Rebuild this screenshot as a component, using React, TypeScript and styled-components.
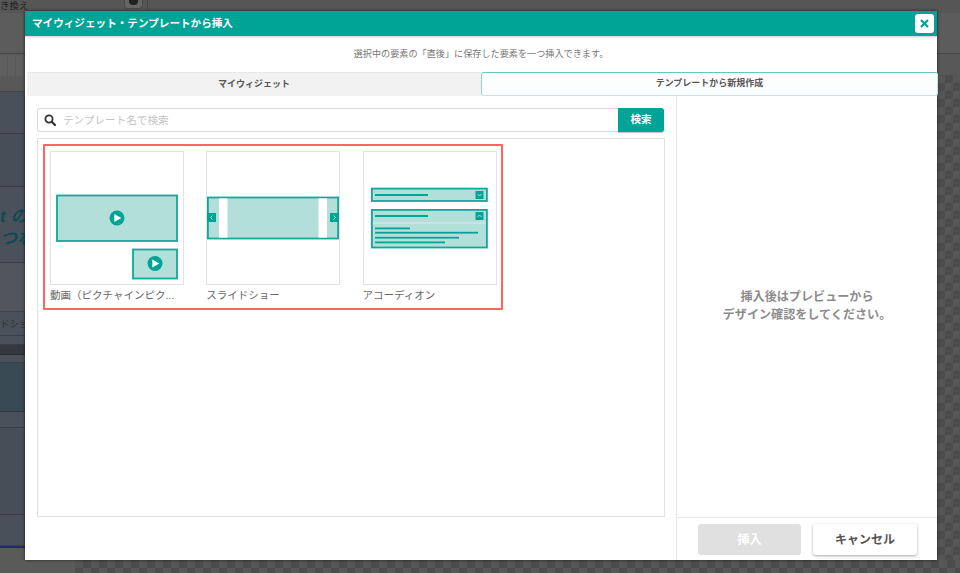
import React from 'react';
import styled, { createGlobalStyle } from 'styled-components';

const TEAL = '#00a496';
const PALE = '#b3dfda';
const EDGE = '#10a899';
const CHECKER = 'conic-gradient(#4c4c4c 25%, transparent 0 50%, #4c4c4c 0 75%, transparent 0)';

const GlobalStyle = createGlobalStyle`
  html, body { margin: 0; padding: 0; height: 100%; overflow: hidden; }
  body { font-family: "Liberation Sans", "Noto Sans CJK JP", sans-serif; }
  * { box-sizing: border-box; }
`;

const Page = styled.div`
  position: relative;
  width: 960px;
  height: 573px;
  background: #5a5a58;
  overflow: hidden;
`;

/* dimmed editor behind the dialog */
const Backdrop = styled.div`
  display: flex;
  flex-direction: column;
  width: 100%;
  height: 100%;
`;

const TopBar = styled.div`
  display: flex;
  align-items: flex-start;
  flex: 0 0 13px;
  background: #565656;
  font-size: 9.5px;
  color: #1e1e1e;
  line-height: 11px;
`;

const TopLabel = styled.span`
  width: 124px;
`;

const TopKnob = styled.span`
  display: flex;
  justify-content: center;
  width: 19px;
  height: 9px;
  background: #666;
  border-radius: 0 0 4px 4px;
  border: 1px solid #4a4a4a;
  border-top: 0;
  margin-right: 4px;

  &::after {
    content: '';
    width: 9px;
    height: 5px;
    background: #222;
    border-radius: 0 0 4px 4px;
  }
`;

const TopDivider = styled.span`
  width: 1px;
  height: 13px;
  background: #4a4a4a;
`;

const BackRow = styled.div<{ $h: number; $bg: string }>`
  flex: 0 0 ${(p) => p.$h}px;
  background: ${(p) => p.$bg};
  border-bottom: 1px solid rgba(0, 0, 0, 0.22);
  overflow: hidden;
  white-space: nowrap;
`;

const BackCells = styled.div`
  display: flex;
  gap: 1px;
  height: 21px;
  margin-top: 1px;
`;

const BackCell = styled.span`
  width: 7px;
  background: #5f5f5f;
`;

const BackHeading = styled.div`
  font-size: 17px;
  line-height: 22px;
  font-weight: 700;
  font-style: italic;
  color: #0d4a52;
`;

const HeadingGap = styled.div`
  height: 19px;
`;

const BackSub = styled.div`
  font-size: 9.5px;
  line-height: 24px;
  color: #2c3138;
`;

const RightChecker = styled.div`
  position: absolute;
  top: 75px;
  right: 0;
  bottom: 0;
  width: 23px;
  background-color: #565656;
  background-image: ${CHECKER};
  background-size: 16px 16px;
`;

const BottomChecker = styled.div`
  position: absolute;
  left: 75px;
  right: 0;
  bottom: 0;
  height: 13px;
  background-color: #565656;
  background-image: ${CHECKER};
  background-size: 16px 16px;
`;

/* dialog */
const Dialog = styled.div`
  position: absolute;
  left: 25px;
  top: 11px;
  width: 912px;
  height: 549px;
  display: flex;
  flex-direction: column;
  background: #fff;
  box-shadow: 0 0 3px rgba(0, 0, 0, 0.65);
`;

const TitleBar = styled.div`
  display: flex;
  align-items: center;
  justify-content: space-between;
  flex: 0 0 25px;
  padding: 0 3px 0 7px;
  background: ${TEAL};
  box-shadow: 0 1px 2px rgba(0, 0, 0, 0.2);
  color: #fff;
  font-size: 10.6px;
  font-weight: 700;
`;

const TitleText = styled.span`
  padding-bottom: 3px;
`;

const CloseButton = styled.button`
  display: flex;
  align-items: center;
  justify-content: center;
  width: 19px;
  height: 19px;
  padding: 0;
  border: 0;
  border-radius: 3px;
  background: #fff;
`;

const Lead = styled.div`
  flex: 0 0 36px;
  display: flex;
  align-items: center;
  justify-content: center;
  font-size: 9.15px;
  color: #777;
  padding-bottom: 3px;
`;

const Tabs = styled.div`
  display: flex;
  flex: 0 0 24px;
  padding-left: 2px;
`;

const Tab = styled.div<{ $active?: boolean }>`
  flex: ${(p) => (p.$active ? '0 0 457px' : '1')};
  display: flex;
  align-items: center;
  justify-content: center;
  padding-bottom: 3px;
  font-size: 9px;
  font-weight: 700;
  color: #555;
  background: #f2f2f2;
  border-top: 1px solid #e8e8e8;
  ${(p) =>
    p.$active &&
    `
    margin-right: -1px;
    background: #fcfdfd;
    border: 1px solid #c2e6e2;
    border-top-color: #6cc6bd;
    border-left-color: #8ed3cc;
    border-radius: 3px;
  `}
`;

const Body = styled.div`
  flex: 1;
  display: flex;
  min-height: 0;
`;

const MainPane = styled.div`
  flex: 0 0 651px;
  display: flex;
  flex-direction: column;
  gap: 6px;
  padding: 12px 12px 43px 12px;
`;

const SearchForm = styled.div`
  display: flex;
  flex: 0 0 24px;
`;

const SearchField = styled.div`
  flex: 1;
  display: flex;
  align-items: center;
  gap: 7px;
  padding: 0 0 0 6px;
  border: 1px solid #d9d9d9;
  border-right: 0;
  border-radius: 3px 0 0 3px;
  font-size: 10.6px;
  color: #c4c4c4;
`;

const Placeholder = styled.span`
  padding-bottom: 2px;
`;

const SearchButton = styled.button`
  flex: 0 0 46px;
  padding: 0 0 3px;
  border: 0;
  border-radius: 0 3px 3px 0;
  background: ${TEAL};
  box-shadow: 0 1px 1px rgba(0, 0, 0, 0.25);
  color: #fff;
  font: 700 10.5px "Liberation Sans", "Noto Sans CJK JP", sans-serif;
`;

const ListBox = styled.div`
  flex: 1;
  margin-right: -1px;
  padding: 5px;
  border: 1px solid #e2e2e2;
`;

const Highlight = styled.div`
  display: inline-flex;
  gap: 22.3px;
  padding: 5px 4px 0 5px;
  height: 166px;
  border: 2px solid #f9675d;
  border-radius: 1px;
`;

const Card = styled.div`
  width: 134px;
  display: flex;
  flex-direction: column;
`;

const Thumb = styled.div`
  width: 134px;
  height: 134px;
  border: 1px solid #e2e2e2;
  background: #fff;
`;

const CardLabel = styled.div`
  margin-top: 3px;
  font-size: 10.5px;
  line-height: 15px;
  color: #666;
  white-space: nowrap;
`;

const SidePane = styled.div`
  flex: 1;
  display: flex;
  flex-direction: column;
  border-left: 1px solid #e6e6e6;
`;

const PreviewNote = styled.div`
  flex: 1;
  display: flex;
  align-items: center;
  justify-content: center;
  text-align: center;
  padding-bottom: 1px;
  font-size: 12.1px;
  line-height: 18px;
  font-weight: 700;
  color: #8c8c8c;
`;

const Footer = styled.div`
  flex: 0 0 43px;
  display: flex;
  justify-content: flex-end;
  gap: 12px;
  padding: 6px 20px 0 0;
  border-top: 1px solid #e6e6e6;
`;

const FooterButton = styled.button<{ $disabled?: boolean }>`
  height: 31px;
  width: ${(p) => (p.$disabled ? '103px' : '104px')};
  padding: 0 0 2px;
  border: 0;
  border-radius: 3px;
  background: ${(p) => (p.$disabled ? '#e0e0e0' : '#fff')};
  color: ${(p) => (p.$disabled ? '#fff' : '#555')};
  box-shadow: ${(p) => (p.$disabled ? 'none' : '0 1px 3px rgba(0,0,0,.35)')};
  font: 700 12px "Liberation Sans", "Noto Sans CJK JP", sans-serif;
`;

const SearchIcon = () => (
  <svg width="12" height="12" viewBox="0 0 12 12" fill="none" stroke="#333" strokeWidth="1.8">
    <circle cx="5" cy="5" r="3.6" />
    <path d="M7.8 7.8 11 11" strokeLinecap="round" strokeWidth="2.2" />
  </svg>
);

const CloseIcon = () => (
  <svg width="9" height="9" viewBox="0 0 9 9" stroke={TEAL} strokeWidth="2.2">
    <path d="M1 1l7 7M8 1l-7 7" />
  </svg>
);

const Play = ({ cx, cy }: { cx: number; cy: number }) => (
  <g>
    <circle cx={cx} cy={cy} r="7.5" fill={TEAL} />
    <path d={`M${cx - 2.7} ${cy - 4}l7 4-7 4z`} fill="#fff" />
  </g>
);

const VideoThumb = () => (
  <svg width="132" height="132" viewBox="0 0 132 132">
    <rect x="6" y="43.5" width="120" height="45.5" fill={PALE} stroke={EDGE} strokeWidth="1.8" />
    <Play cx={66} cy={66} />
    <rect x="82" y="97.5" width="44" height="29" fill={PALE} stroke={EDGE} strokeWidth="1.8" />
    <Play cx={104} cy={111.5} />
  </svg>
);

const SlideThumb = () => (
  <svg width="132" height="132" viewBox="0 0 132 132">
    <rect x="0.9" y="45.5" width="130.2" height="41" fill={PALE} stroke={EDGE} strokeWidth="1.8" />
    <rect x="12" y="46.4" width="8.5" height="39.2" fill="#fff" />
    <rect x="111.5" y="46.4" width="8.5" height="39.2" fill="#fff" />
    <rect x="0" y="61" width="9" height="9" fill={TEAL} />
    <path d="M5.5 63.5 3.5 65.5l2 2" fill="none" stroke={PALE} />
    <rect x="123" y="61" width="9" height="9" fill={TEAL} />
    <path d="M126.5 63.5l2 2-2 2" fill="none" stroke={PALE} />
  </svg>
);

const AccordionThumb = () => (
  <svg width="132" height="132" viewBox="0 0 132 132">
    <rect x="7.9" y="36.6" width="115" height="12.4" fill={PALE} stroke={EDGE} strokeWidth="1.8" />
    <rect x="11" y="42" width="53" height="2" fill={TEAL} />
    <rect x="111.5" y="39" width="8" height="8" fill={TEAL} />
    <path d="M113.5 42l2 2 2-2" fill="none" stroke={PALE} />
    <rect x="7.9" y="57.9" width="115" height="37.6" fill={PALE} stroke={EDGE} strokeWidth="1.8" />
    <rect x="8.8" y="70.5" width="113.2" height="1" fill="#d5ece9" />
    <rect x="11" y="63" width="53" height="2" fill={TEAL} />
    <rect x="111.5" y="60" width="8" height="8" fill={TEAL} />
    <path d="M113.5 65l2-2 2 2" fill="none" stroke={PALE} />
    <rect x="11" y="75.5" width="35" height="1.8" fill={TEAL} />
    <rect x="11" y="79.8" width="103" height="1.8" fill={TEAL} />
    <rect x="11" y="84.8" width="84" height="1.8" fill={TEAL} />
    <rect x="11" y="89.5" width="70" height="1.8" fill={TEAL} />
  </svg>
);

const App = () => (
  <Page>
    <GlobalStyle />
    <Backdrop>
      <TopBar>
        <TopLabel>き換え</TopLabel>
        <TopKnob />
        <TopDivider />
      </TopBar>
      <BackRow $h={41} $bg="#5c5c5c" />
      <BackRow $h={38} $bg="#585858">
        <BackCells>
          <BackCell />
          <BackCell />
          <BackCell />
        </BackCells>
      </BackRow>
      <BackRow $h={42} $bg="#49505a" />
      <BackRow $h={53} $bg="#474e58" />
      <BackRow $h={76} $bg="#4a515b">
        <HeadingGap />
        <BackHeading>t の</BackHeading>
        <BackHeading>つな</BackHeading>
      </BackRow>
      <BackRow $h={49} $bg="#51565e" />
      <BackRow $h={24} $bg="#4a515b">
        <BackSub>ドショ</BackSub>
      </BackRow>
      <BackRow $h={9} $bg="#4a515b" />
      <BackRow $h={10} $bg="#343840" />
      <BackRow $h={8} $bg="#4a515b" />
      <BackRow $h={49} $bg="#3a4a55" />
      <BackRow $h={16} $bg="#4a515b" />
      <BackRow $h={87} $bg="#474e58" />
      <BackRow $h={31} $bg="#49505a" />
      <BackRow $h={2} $bg="#21356d" />
    </Backdrop>
    <RightChecker />
    <BottomChecker />
    <Dialog>
      <TitleBar>
        <TitleText>マイウィジェット・テンプレートから挿入</TitleText>
        <CloseButton>
          <CloseIcon />
        </CloseButton>
      </TitleBar>
      <Lead>選択中の要素の「直後」に保存した要素を一つ挿入できます。</Lead>
      <Tabs>
        <Tab>マイウィジェット</Tab>
        <Tab $active>テンプレートから新規作成</Tab>
      </Tabs>
      <Body>
        <MainPane>
          <SearchForm>
            <SearchField>
              <SearchIcon />
              <Placeholder>テンプレート名で検索</Placeholder>
            </SearchField>
            <SearchButton>検索</SearchButton>
          </SearchForm>
          <ListBox>
            <Highlight>
              <Card>
                <Thumb>
                  <VideoThumb />
                </Thumb>
                <CardLabel>動画（ピクチャインピク...</CardLabel>
              </Card>
              <Card>
                <Thumb>
                  <SlideThumb />
                </Thumb>
                <CardLabel>スライドショー</CardLabel>
              </Card>
              <Card>
                <Thumb>
                  <AccordionThumb />
                </Thumb>
                <CardLabel>アコーディオン</CardLabel>
              </Card>
            </Highlight>
          </ListBox>
        </MainPane>
        <SidePane>
          <PreviewNote>
            挿入後はプレビューから
            <br />
            デザイン確認をしてください。
          </PreviewNote>
          <Footer>
            <FooterButton $disabled>挿入</FooterButton>
            <FooterButton>キャンセル</FooterButton>
          </Footer>
        </SidePane>
      </Body>
    </Dialog>
  </Page>
);

export default App;
